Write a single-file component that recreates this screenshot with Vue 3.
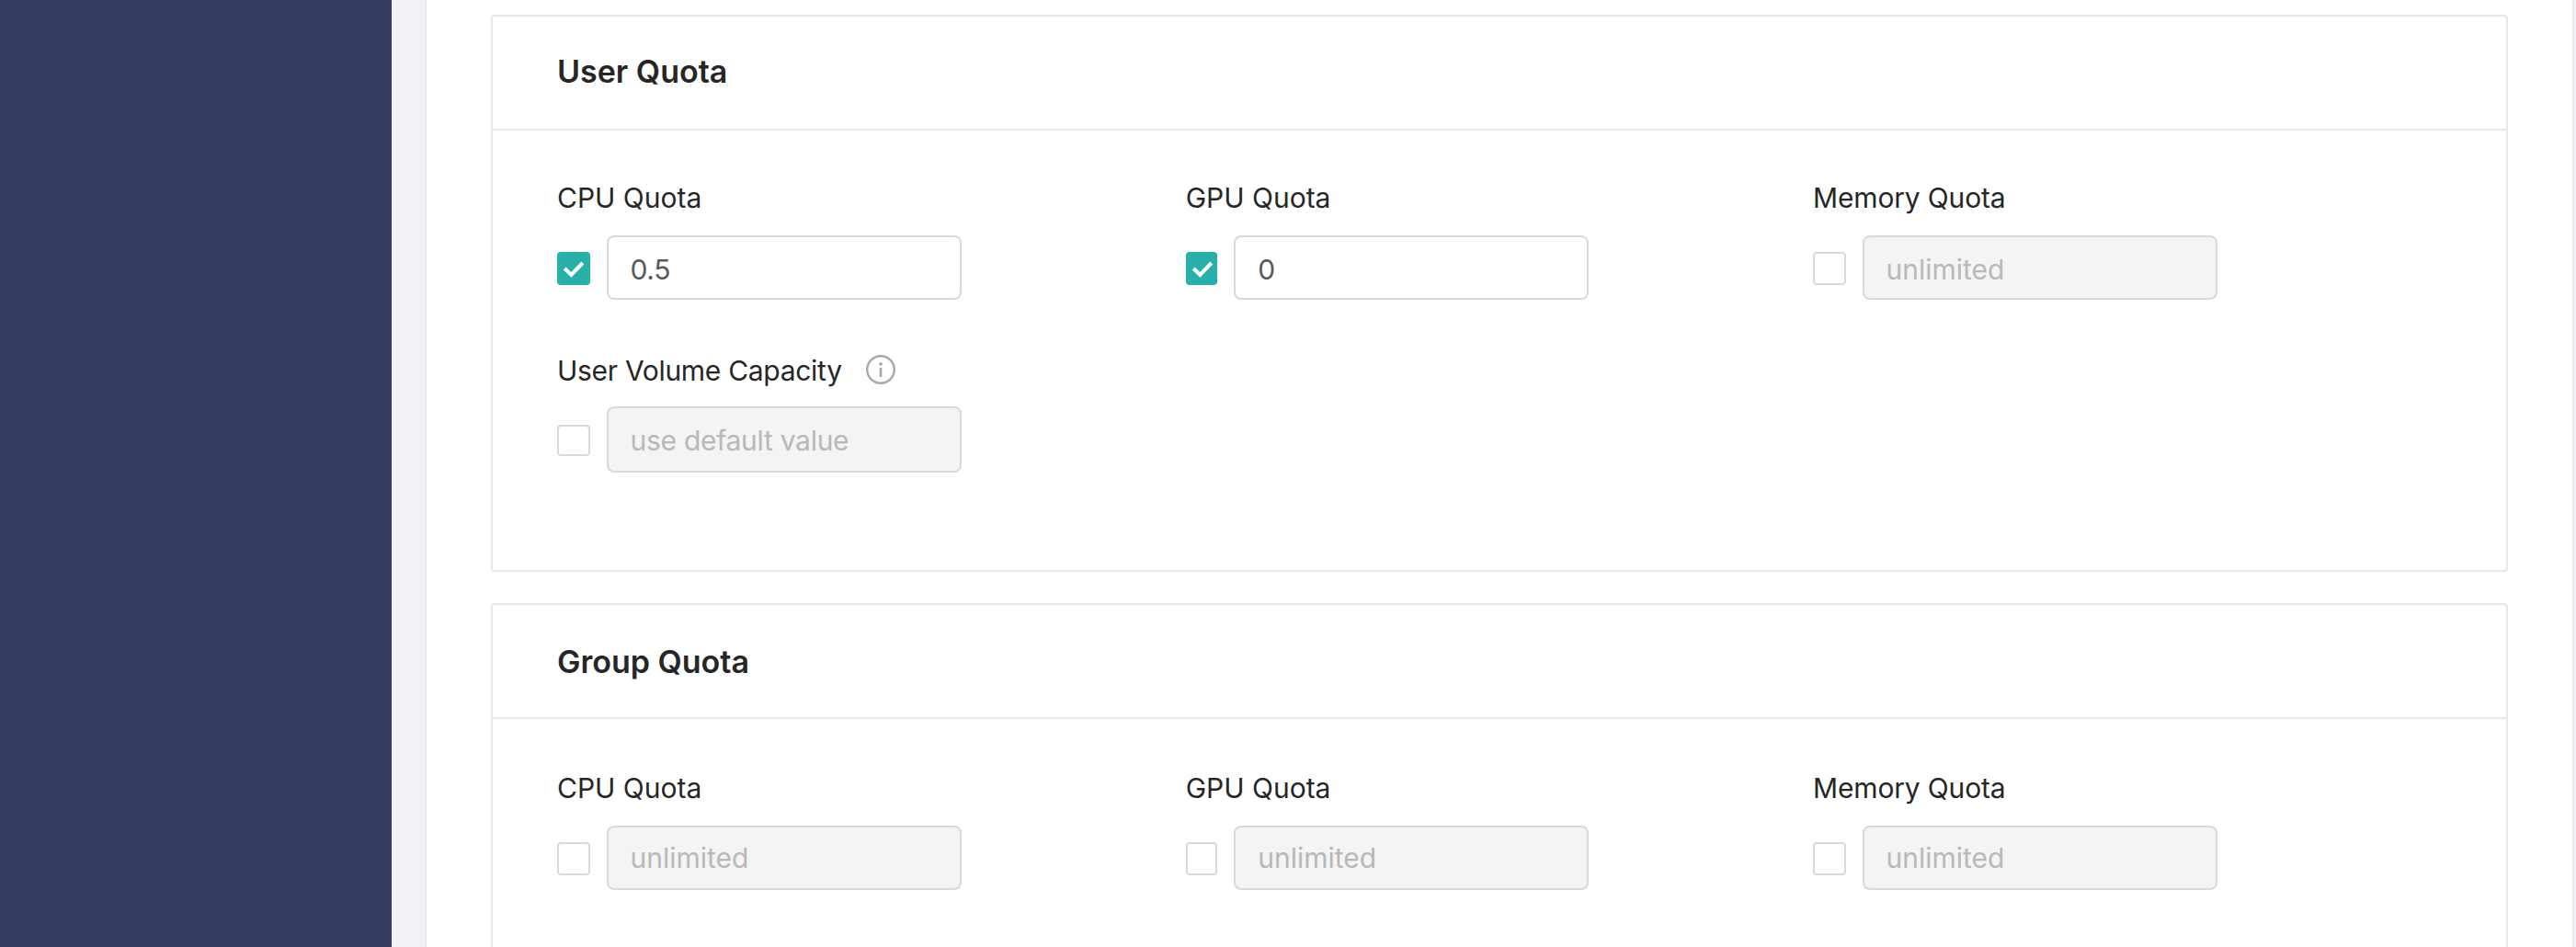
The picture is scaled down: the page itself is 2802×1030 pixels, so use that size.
<script setup>
const cards = [
  {
    id: 'user',
    title: 'User Quota',
    rows: [
      {
        id: 'compute',
        fields: [
          { label: 'CPU Quota', value: '0.5', checked: true },
          { label: 'GPU Quota', value: '0', checked: true },
          { label: 'Memory Quota', placeholder: 'unlimited' }
        ]
      },
      {
        id: 'volume',
        fields: [
          { label: 'User Volume Capacity', placeholder: 'use default value', info: true }
        ]
      }
    ]
  },
  {
    id: 'group',
    title: 'Group Quota',
    rows: [
      {
        id: 'compute',
        fields: [
          { label: 'CPU Quota', placeholder: 'unlimited' },
          { label: 'GPU Quota', placeholder: 'unlimited' },
          { label: 'Memory Quota', placeholder: 'unlimited' }
        ]
      }
    ]
  }
]
</script>

<template>
  <div class="layout">
    <aside class="sidebar"></aside>
    <main class="content">
      <section v-for="card in cards" :key="card.id" class="card" :class="card.id">
        <header class="card-head">
          <h2>{{ card.title }}</h2>
        </header>
        <div class="card-body">
          <div v-for="row in card.rows" :key="row.id" class="row" :class="row.id">
            <div v-for="field in row.fields" :key="field.label" class="field">
              <div class="label">
                <span>{{ field.label }}</span>
                <svg v-if="field.info" class="info" viewBox="0 0 32 32" aria-hidden="true">
                  <circle cx="16" cy="16" r="14.8" fill="none" stroke="currentColor" stroke-width="2.4" />
                  <circle cx="16" cy="9.8" r="1.9" fill="currentColor" />
                  <rect x="14.7" y="13.8" width="2.6" height="10.2" fill="currentColor" />
                </svg>
              </div>
              <div class="control">
                <span class="checkbox" :class="{ checked: field.checked }">
                  <svg v-if="field.checked" viewBox="0 0 36 36" aria-hidden="true">
                    <path d="M8.2 18 L15.3 25 L27.8 12" fill="none" stroke="#fff" stroke-width="4" />
                  </svg>
                </span>
                <div class="input" :class="{ disabled: !field.checked }">
                  <span>{{ field.value ?? field.placeholder }}</span>
                </div>
              </div>
            </div>
          </div>
        </div>
      </section>
    </main>
  </div>
</template>

<style>
body {
  margin: 0;
  overflow: hidden;
}
</style>

<style scoped>
* {
  box-sizing: border-box;
}
.layout {
  display: flex;
  height: 1030px;
  overflow: hidden;
  background: #f0f2f6;
  font-family: Inter, "Liberation Sans", sans-serif;
  font-size: 30px;
  color: #262626;
}
.sidebar {
  flex: none;
  width: 426px;
  background: #373d62;
}
.content {
  flex: 1;
  min-width: 0;
  margin: 0 2px 0 36px;
  padding: 16px 70px 0;
  border: solid #e8e8e8;
  border-width: 0 2px;
  background: #fff;
}
.card {
  border: 2px solid #e8e8e8;
  border-radius: 4px;
}
.user {
  height: 606px;
  margin-bottom: 34px;
}
.group {
  height: 500px;
}
.card-head {
  display: flex;
  align-items: center;
  height: 124px;
  padding: 0 70px;
  border-bottom: 2px solid #e8e8e8;
}
.user .card-head {
  padding-bottom: 2px;
}
.group .card-head {
  padding-top: 1px;
}
h2 {
  margin: 0;
  font-size: 34px;
  font-weight: 580;
  line-height: 50px;
}
.card-body {
  padding: 49px 70px 0;
}
.group .card-body {
  padding-top: 51px;
}
.row {
  display: grid;
  grid-template-columns: repeat(3, 683px);
}
.volume {
  margin-top: 53px;
}
.label {
  display: flex;
  align-items: center;
  height: 48px;
  margin-bottom: 17px;
}
.field:nth-child(2) .label {
  padding-left: 0.7px;
}
.field:nth-child(3) .label {
  letter-spacing: -0.16px;
}
.volume .label {
  margin-bottom: 15px;
  letter-spacing: -0.3px;
}
.info {
  width: 32px;
  height: 32px;
  margin: -2px 0 0 26px;
  color: #a8a8a8;
}
.control {
  display: flex;
  align-items: center;
}
.checkbox {
  flex: none;
  width: 36px;
  height: 36px;
  margin: 2px 18px 0 0;
  border: 2px solid #d9d9d9;
  border-radius: 4px;
  background: #fff;
}
.field:nth-child(2) .checkbox {
  width: 34px;
  margin-left: 1px;
}
.volume .checkbox {
  height: 34px;
}
.checkbox.checked {
  border: 0;
  background: #27b1aa;
}
.checkbox svg {
  display: block;
  width: 36px;
  height: 36px;
}
.input {
  display: flex;
  align-items: center;
  width: 386px;
  height: 70px;
  padding: 4px 23.5px 0;
  border: 2px solid #d9d9d9;
  border-radius: 8px;
  background: #fff;
  color: #595959;
  letter-spacing: -0.3px;
}
.field:nth-child(2) .input {
  padding-left: 24.2px;
}
.input.disabled {
  background: #f4f4f4;
  color: #b8b8b8;
  letter-spacing: 0;
}
.volume .input {
  height: 72px;
  padding-top: 2px;
  letter-spacing: -0.28px;
}
.group .input {
  padding-top: 0;
}
</style>
